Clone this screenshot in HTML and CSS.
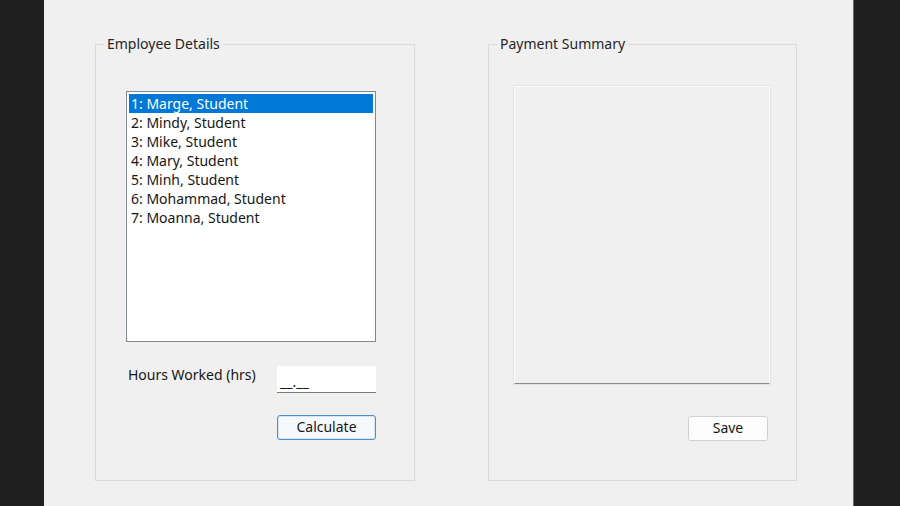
FILE: index.html
```html
<!DOCTYPE html>
<html>
<head>
<meta charset="utf-8">
<link rel="stylesheet" href="styles.css">
</head>
<body>
<div class="screen">
  <div class="window">
    <fieldset class="group group-employee">
      <legend class="legend">Employee Details</legend>
      <div class="group-body body-employee">
        <div class="listbox">
          <div class="item selected">1: Marge, Student</div>
          <div class="item">2: Mindy, Student</div>
          <div class="item">3: Mike, Student</div>
          <div class="item">4: Mary, Student</div>
          <div class="item">5: Minh, Student</div>
          <div class="item">6: Mohammad, Student</div>
          <div class="item">7: Moanna, Student</div>
        </div>
        <div class="hours-row">
          <span class="label">Hours Worked (hrs)</span>
          <div class="input">__.__</div>
        </div>
        <div class="btn-row">
          <div class="btn btn-primary">Calculate</div>
        </div>
      </div>
    </fieldset>
    <fieldset class="group group-summary">
      <legend class="legend">Payment Summary</legend>
      <div class="group-body body-summary">
        <div class="summary-box"></div>
        <div class="btn-row btn-row-save">
          <div class="btn btn-save">Save</div>
        </div>
      </div>
    </fieldset>
  </div>
</div>
</body>
</html>
```
FILE: styles.css
```css
html, body {
  margin: 0;
  padding: 0;
  background: #1f1f1f;
}
.screen {
  width: 900px;
  height: 506px;
  padding-left: 44px;
  box-sizing: border-box;
  display: flex;
  font-family: "Noto Sans", "Open Sans", sans-serif;
  color: #161616;
}
.window {
  width: 810px;
  height: 506px;
  background: #f0f0f0;
  border-right: 1px solid #6a6a6a;
  box-sizing: border-box;
  display: flex;
  align-items: flex-start;
  padding-left: 51px;
  padding-top: 35px;
  gap: 73px;
}
.group {
  margin: 0;
  padding: 0;
  min-width: 0;
  border: 1px solid #dadada;
  box-sizing: border-box;
}
.legend {
  margin-left: 8px;
  padding: 0 3px;
  font-size: 14px;
  line-height: 18px;
  color: #262626;
}
.group-employee {
  width: 320px;
  height: 446px;
}
.group-summary {
  width: 309px;
  height: 446px;
}
.group-body {
  display: flex;
  flex-direction: column;
}
.body-employee {
  padding-left: 30px;
}
.body-summary {
  padding-left: 25px;
}
.listbox {
  margin-top: 38px;
  width: 250px;
  height: 251px;
  box-sizing: border-box;
  background: #ffffff;
  border: 1px solid #828790;
  padding: 2px 2px;
  font-size: 14px;
}
.item {
  height: 19px;
  line-height: 19px;
  padding-left: 2px;
  white-space: nowrap;
}
.item.selected {
  background: #0078d7;
  color: #ffffff;
}
.hours-row {
  margin-top: 24px;
  width: 250px;
  display: flex;
  justify-content: space-between;
  align-items: flex-start;
}
.label {
  padding-left: 2px;
  font-size: 14px;
  line-height: 18px;
}
.input {
  width: 99px;
  height: 27px;
  box-sizing: border-box;
  background: #ffffff;
  border-bottom: 1px solid #7a7a7a;
  font-size: 14px;
  line-height: 26px;
  padding-left: 3px;
  padding-top: 3px;
}
.btn-row {
  width: 250px;
  display: flex;
  justify-content: flex-end;
  margin-top: 22px;
}
.btn {
  height: 25px;
  box-sizing: border-box;
  border-radius: 3px;
  font-size: 14px;
  line-height: 22px;
  text-align: center;
}
.btn-primary {
  width: 99px;
  border: 1px solid #4a8fcf;
  background: #f6f9fc;
  box-shadow: inset 0 0 0 1px #d4e6f6;
}
.summary-box {
  margin-top: 33px;
  width: 256px;
  height: 298px;
  box-sizing: border-box;
  background: #f0f0f0;
  border: 1px solid #fbfbfb;
  border-bottom: 1px solid #8a8a8a;
  box-shadow: 0 0 0 1px #e4e4e4;
}
.btn-row-save {
  width: 254px;
  margin-top: 32px;
}
.btn-save {
  width: 80px;
  border: 1px solid #d0d0d0;
  background: #fdfdfd;
}
```
